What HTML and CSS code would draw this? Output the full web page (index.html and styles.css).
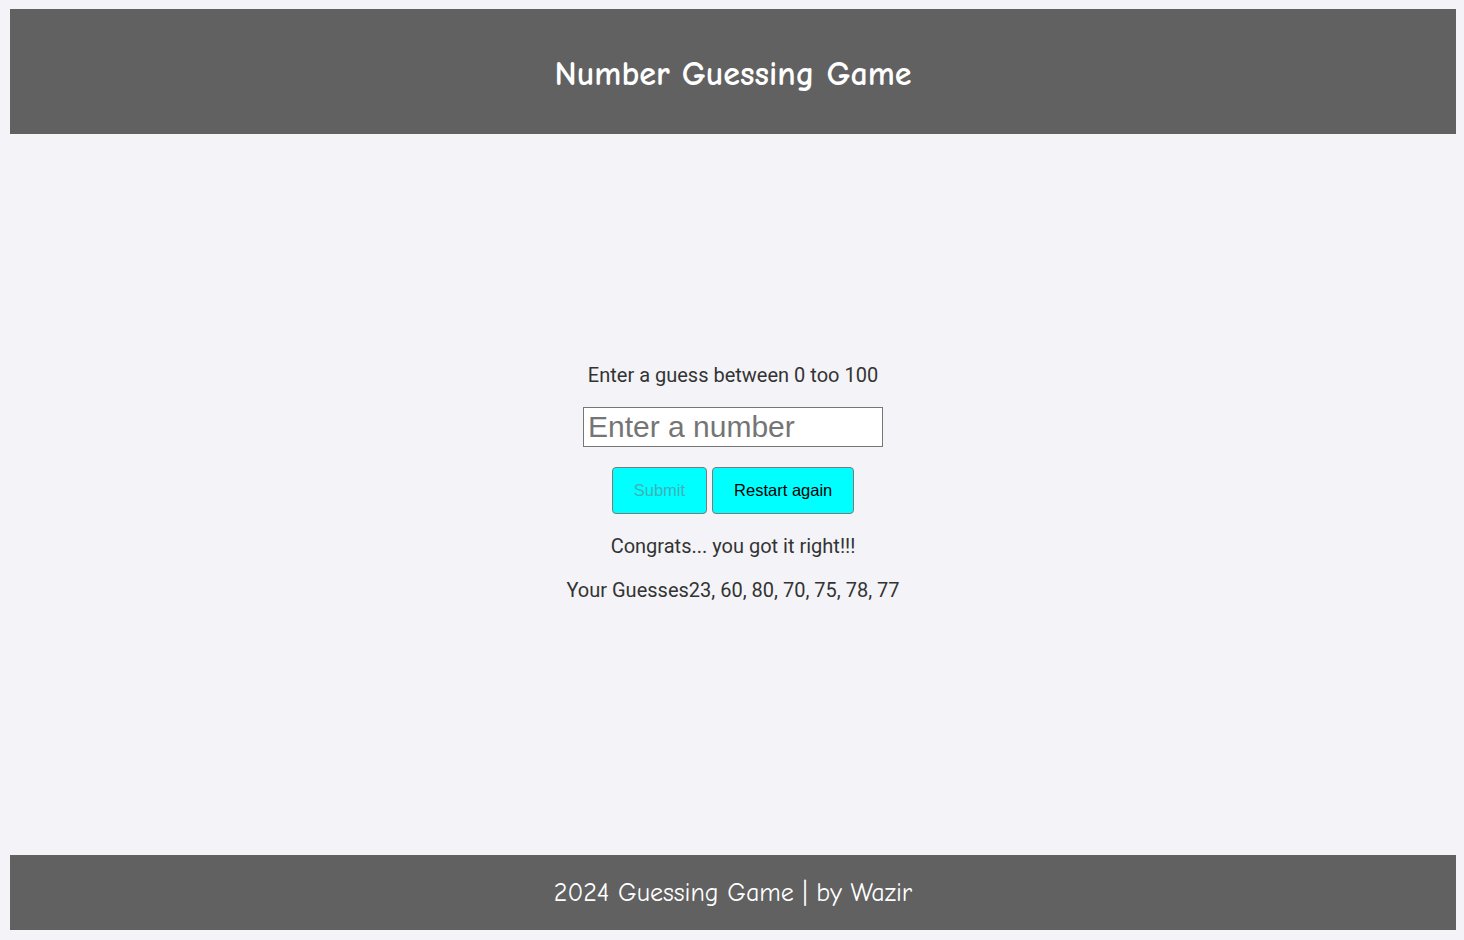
FILE: index.html
```html
<!DOCTYPE html>
<html>
<head>
<meta charset="utf-8">
<link rel="stylesheet" href="styles.css">
<title>Number Guessing Game</title>
</head>
<body>
<div class="page">
  <header class="top">
    <h1 class="title">Number Guessing Game</h1>
  </header>
  <main class="main">
    <div class="game">
      <p class="line">Enter a guess between 0 too 100</p>
      <input class="guess" type="text" placeholder="Enter a number">
      <div class="buttons">
        <button class="btn" disabled>Submit</button>
        <button class="btn">Restart again</button>
      </div>
      <p class="line">Congrats... you got it right!!!</p>
      <p class="line">Your Guesses23, 60, 80, 70, 75, 78, 77</p>
    </div>
  </main>
  <footer class="bottom">
    <p class="credit">2024 Guessing Game | by Wazir</p>
  </footer>
</div>
</body>
</html>
```
FILE: styles.css
```css
html, body {
  margin: 0;
  height: 100%;
}
body {
  background: #f4f4f8;
  font-family: Roboto, "Liberation Sans", sans-serif;
  color: #333333;
}
.page {
  box-sizing: border-box;
  height: 940px;
  padding: 9px 8px 10px 10px;
  display: flex;
  flex-direction: column;
}
.top {
  height: 125px;
  background: #616161;
  display: flex;
  align-items: center;
  justify-content: center;
  flex-shrink: 0;
}
.title {
  margin: 0;
  color: #ffffff;
  font-family: "Comic Sans MS", "Comic Neue", cursive;
  font-size: 34px;
  font-weight: bold;
  padding-top: 5px;
}
.main {
  flex: 1;
  display: flex;
  align-items: center;
  justify-content: center;
  padding-bottom: 24px;
}
.game {
  display: flex;
  flex-direction: column;
  align-items: center;
  gap: 20px;
}
.line {
  margin: 0;
  font-size: 20px;
  line-height: 24px;
}
.guess {
  box-sizing: border-box;
  width: 300px;
  height: 40px;
  border: 1px solid #767676;
  padding: 0 4px;
  font-family: "Liberation Sans", Arial, sans-serif;
  font-size: 30px;
  background: #ffffff;
  color: #000;
}
.guess::placeholder {
  color: #757575;
}
.buttons {
  display: flex;
  gap: 5px;
}
.btn {
  height: 47px;
  padding: 0 21px;
  background: #00ffff;
  border: 1px solid #7a7a7a;
  border-radius: 4px;
  font-family: "Liberation Sans", Arial, sans-serif;
  font-size: 16.5px;
  color: #000000;
}
.btn:disabled {
  color: #3cb3b8;
}
.bottom {
  height: 75px;
  background: #616161;
  display: flex;
  align-items: center;
  justify-content: center;
  flex-shrink: 0;
}
.credit {
  margin: 0;
  color: #ffffff;
  font-family: "Comic Sans MS", "Comic Neue", cursive;
  font-size: 26px;
  font-weight: 500;
}
```
